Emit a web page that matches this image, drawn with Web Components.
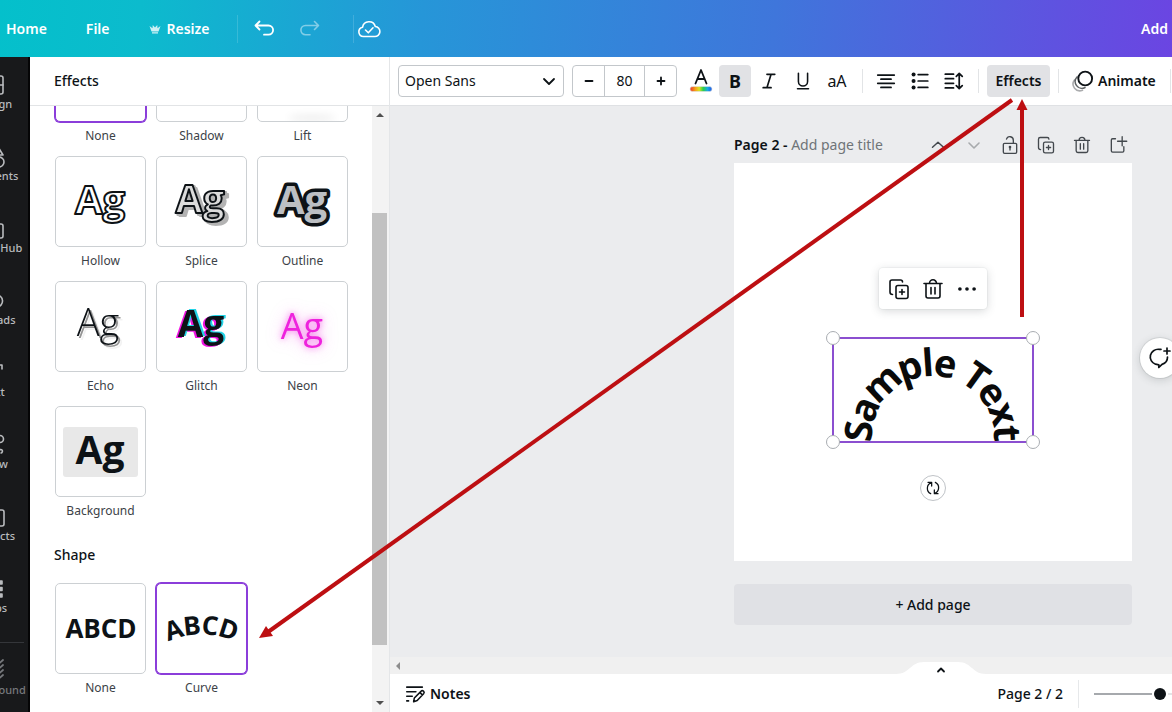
<!DOCTYPE html>
<html lang="en">
<head>
<meta charset="utf-8">
<meta name="viewport" content="width=device-width, initial-scale=1">
<title>Design editor</title>
<style>
  html, body { margin: 0; height: 100%; }
  body { font: 14px/20px "Noto Sans", "Open Sans", sans-serif; color: #0d1216; overflow: hidden; }
</style>
</head>
<body>
<design-app></design-app>

<script>
const RESET = `
  *, *::before, *::after { box-sizing: border-box; }
  :host([hidden]) { display: none; }
  button, select, input { font: inherit; color: inherit; margin: 0; }
  button { border: 0; padding: 0; background: none; cursor: pointer; display: inline-flex; align-items: center; justify-content: center; }
`;

function define(name, css, html, setup) {
  const template = document.createElement('template');
  template.innerHTML = `<style>${RESET}${css}</style>${html}`;
  customElements.define(name, class extends HTMLElement {
    constructor() {
      super();
      this.attachShadow({ mode: 'open' }).append(template.content.cloneNode(true));
    }
    connectedCallback() { if (setup) setup(this, this.shadowRoot); }
  });
}

/* Icons, drawn on a 24 unit grid */
const ICONS = {
  crown: '<path fill="currentColor" stroke="none" d="M1 6 7 10.500 7.500 4l4.500 5 4.500-5 .5 6.500L23 6l-4 11H5zM6 18.500h12V21H6z"/>',
  undo: '<path d="M7.500 4.500 3.500 8.500l4 4M4 8.500h12.500a4.600 4.600 0 0 1 0 9.200H12"/>',
  redo: '<path d="m16.500 4.500 4 4-4 4M20 8.500H7.500a4.600 4.600 0 0 0 0 9.200H12"/>',
  cloud: '<path d="M6.500 19.500a4.700 4.700 0 0 1-.9-9.300 6.500 6.500 0 0 1 12.700-.7 5 5 0 0 1-.8 10zM8.500 13l2.800 2.800 4.700-5"/>',
  chevronDown: '<path d="m7 10 5 5 5-5"/>',
  chevronUp: '<path d="m6 14.500 6-5.500 6 5.500"/>',
  caretUp: '<path d="m9 13.500 3-3 3 3"/>',
  minus: '<path d="M8.500 12h7"/>',
  plus: '<path d="M8.500 12h7M12 8.500v7"/>',
  color: '<path d="M6.500 14.500 12 1l5.500 13.500M8.300 10h7.400" stroke-width="1.800"/><rect x="1" y="17.500" width="22" height="5" rx="2.500" fill="url(#rainbow)" stroke="#dfe1e4" stroke-width=".6"/><defs><linearGradient id="rainbow"><stop offset="0" stop-color="#e8322c"/><stop offset=".25" stop-color="#f6a417"/><stop offset=".42" stop-color="#d8e324"/><stop offset=".6" stop-color="#2ecf4b"/><stop offset=".8" stop-color="#19a9e6"/><stop offset="1" stop-color="#2455e0"/></linearGradient></defs>',
  italic: '<path d="M9.500 4H19M5 20h9.500M14.500 4l-5 16" stroke-width="2"/>',
  underline: '<path d="M7 3.500v9a5 5 0 0 0 10 0v-9M6 20.500h12" stroke-width="1.700"/>',
  align: '<path d="M3 5.500h18M6.500 10h11M3 14.500h18M6.500 19h11" stroke-width="1.900"/>',
  list: '<path d="M10 5h10.500M10 12h10.500M10 19h10.500" stroke-width="1.900"/><circle cx="5" cy="5" r="2.200" fill="currentColor" stroke="none"/><circle cx="5" cy="12" r="2.200" fill="currentColor" stroke="none"/><circle cx="5" cy="19" r="2.200" fill="currentColor" stroke="none"/>',
  spacing: '<path d="M2.500 4.500h9M2.500 9.500h9M2.500 14.500h9M2.500 19.500h9M17.700 4v16M14.500 7l3.200-3.200L21 7M14.500 17l3.200 3.200L21 17" stroke-width="1.900"/>',
  animate: '<circle cx="14.200" cy="9.500" r="6.900" stroke-width="1.900"/><path d="M6 8a6.700 6.700 0 0 0 8 10.500" opacity=".65"/><path d="M3.500 11a6.700 6.700 0 0 0 8 10.200" opacity=".35"/>',
  lock: '<rect x="4" y="10" width="16" height="12" rx="1.500"/><path d="M16 10V6.500a4.200 4.200 0 0 0-8.200-1.500M12 14.500v3.500"/><circle cx="12" cy="14.500" r=".8"/>',
  copy: '<rect x="9" y="8.500" width="12" height="13" rx="2"/><path d="M5.500 17.500A2.500 2.500 0 0 1 3 15V5a2 2 0 0 1 2-2h8.500a2 2 0 0 1 2 2M15 12.500v5M12.500 15h5"/>',
  trash: '<path d="M3 6.500h18M5 6.500V19a2 2 0 0 0 2 2h10a2 2 0 0 0 2-2V6.500M8.500 6.300a3.500 3.500 0 0 1 7 0M10 10.500v6.500M14 10.500v6.500"/>',
  addPage: '<path d="M9 4.500H5.500A1.500 1.500 0 0 0 4 6v13a1.500 1.500 0 0 0 1.500 1.500h12A1.500 1.500 0 0 0 19 19v-5M17 2v11M11.500 7.500h11"/>',
  dots: '<g fill="currentColor" stroke="none"><circle cx="3.500" cy="12" r="2.200"/><circle cx="12" cy="12" r="2.200"/><circle cx="20.500" cy="12" r="2.200"/></g>',
  rotate: '<path d="M4.500 3.500H10v5.500M9.500 4A9 9 0 0 0 8.500 20.500M19.500 20.500H14V15M14.500 20A9 9 0 0 0 15.500 3.500"/>',
  comment: '<path d="M13 3.300h-2a8 7.700 0 0 0-3.500 14.900l3.300.6v2.700l3.200-3.100a8 7.700 0 0 0 5.500-7.400M19 2v6M16 5h6"/>',
  notes: '<path d="M3 4.500h17M3 9.500h10M3 14.500h6M3 19.500h2M10.500 20.500l.8-4.200 7.200-7.200a1.900 1.900 0 0 1 2.900 2.600l-7 7.400zM17.500 10.500l2.500 2.500"/>',
  design: '<rect x="3" y="3" width="18" height="18" rx="2"/><path d="M3 12h18M14 3V21"/>',
  elements: '<path d="m15.500 1 5.500 9H10z"/><circle cx="17" cy="17" r="5"/><path d="M2 13h7v8H2z"/>',
  brand: '<rect x="3" y="7" width="18" height="14" rx="2"/><path d="M11 7V5a2 2 0 0 1 2-2h2a2 2 0 0 1 2 2v2"/>',
  uploads: '<path d="M9 18H7a5 5 0 0 1-1-9.500 6.500 6.500 0 0 1 8-2.500 6 6 0 1 1 1 12M12 21v-9"/>',
  text: '<path d="M4 7V4h16v4M12 4v16"/>',
  draw: '<path d="M4 20 12 9"/><circle cx="18" cy="6" r="3.500"/><path d="M15 17c3 0 4-1 5 0s0 3-1 3"/>',
  projects: '<path d="M3 19V5h6l1 0h10a2 2 0 0 1 2 2v12a2 2 0 0 1-2 2H5a2 2 0 0 1-2-2z"/>',
  apps: '<path fill="currentColor" d="M4 4h3v3H4zM10 4h3v3h-3zM17 4h3v3h-3zM4 10.500h3v3H4zM10 10.500h3v3h-3zM17 10.500h3v3h-3zM4 17h3v3H4zM10 17h3v3h-3zM17 17h3v3h-3z"/>',
  background: '<path d="m14 7 7-6M14 12l7-6M14 17l7-6M14 22l7-6M3 12l7-6M3 18l7-6" stroke-width="1.800"/>'
};

define('ui-icon',
  `:host { display: inline-flex; flex: none; } svg { display: block; fill: none; stroke: currentColor; stroke-linecap: round; stroke-linejoin: round; }`,
  `<svg viewBox="0 0 24 24" aria-hidden="true"></svg>`,
  (host, root) => {
    const svg = root.querySelector('svg');
    const size = host.getAttribute('size') || '24';
    svg.setAttribute('width', size);
    svg.setAttribute('height', size);
    svg.setAttribute('stroke-width', host.getAttribute('weight') || '1.600');
    svg.innerHTML = ICONS[host.getAttribute('name')];
  });

define('top-bar', `
  :host { display: flex; align-items: center; height: 57px; padding: 0 4px 0 6px; color: #fff; font-weight: 600; overflow: hidden; white-space: nowrap;
    background: linear-gradient(95deg, #04c0cb 0%, #0cbbcd 12%, #2696d8 36%, #3f76db 66%, #5f52e0 90%, #6b45e2 100%); }
  nav { display: flex; align-items: center; gap: 39px; flex: 1; }
  a { color: inherit; text-decoration: none; display: flex; align-items: center; gap: 6px; }
  .tools { display: flex; align-items: center; height: 32px; margin-left: -12px; }
  .tools button { width: 46px; height: 32px; }
  i { width: 1px; height: 28px; background: #ffffff26; }
  .tools .undo { margin-left: 3px; }
  .dim { opacity: .45; margin-right: 20px; }
  .tools .save { width: 30px; }
  .crown { opacity: .8; }
`, `
  <nav aria-label="Main">
    <a href="#home">Home</a><a href="#file">File</a>
    <a href="#resize"><ui-icon class="crown" name="crown" size="12"></ui-icon>Resize</a>
    <div class="tools"><i></i>
      <button class="undo" aria-label="Undo"><ui-icon name="undo" weight="1.800"></ui-icon></button>
      <button class="dim" aria-label="Redo"><ui-icon name="redo"></ui-icon></button><i></i>
      <button class="save" aria-label="Saved"><ui-icon name="cloud"></ui-icon></button>
    </div>
  </nav>
  <a href="#add">Add</a>
`);

define('rail-item', `
  :host { display: block; height: 72px; }
  a { display: flex; flex-direction: column; align-items: center; width: 72px; padding-top: 16px; color: #b9bbbe; text-decoration: none; font-size: 11px; line-height: 14px; font-weight: 500; white-space: nowrap; }
  :host([faded]) a { color: #76787c; }
`, `<a href="#panel"><ui-icon></ui-icon><slot></slot></a>`,
(host, root) => {
  const icon = document.createElement('ui-icon');
  icon.setAttribute('name', host.getAttribute('icon'));
  root.querySelector('ui-icon').replaceWith(icon);
});

define('side-rail', `
  :host { display: flex; justify-content: flex-end; overflow: hidden; background: #18191b; border-right: 2px solid #050506; }
  nav { flex: none; width: 70px; }
  hr { margin: 9px 4px 0 0; border: 0; border-top: 1px solid #34363a; }
`, `
  <nav aria-label="Tools">
    <rail-item icon="design">Design</rail-item>
    <rail-item icon="elements">Elements</rail-item>
    <rail-item icon="brand">Brand Hub</rail-item>
    <rail-item icon="uploads">Uploads</rail-item>
    <rail-item icon="text">Text</rail-item>
    <rail-item icon="draw">Draw</rail-item>
    <rail-item icon="projects">Projects</rail-item>
    <rail-item icon="apps">Apps</rail-item>
    <hr>
    <rail-item icon="background" faded>Background</rail-item>
  </nav>
`);

define('effect-tile', `
  :host { display: flex; flex-direction: column; gap: 5px; align-items: center; }
  button { width: 91px; height: 91px; border: 1px solid #ccd0d3; border-radius: 5px; background: #fff; overflow: hidden; }
  :host([selected]) button { border-color: #8b3dda; box-shadow: 0 0 0 1px #8b3dda; }
  label { font-size: 12px; line-height: 18px; color: #3c4247; }
`, `<button id="tile"><slot></slot></button><label for="tile"></label>`,
(host, root) => {
  root.querySelector('label').textContent = host.getAttribute('label');
  root.querySelector('button').setAttribute('aria-pressed', host.hasAttribute('selected'));
});

/* Sample lettering inside the tiles */
const T = (attrs, x = 45, y = 57, word = 'Ag') => `<text x="${x}" y="${y}" text-anchor="middle" ${attrs}>${word}</text>`;
const ART = {
  lift: '<ellipse cx="54" cy="86" rx="24" ry="2" fill="#000" opacity=".12" style="filter:blur(4px)"/>',
  hollow: T('font-weight="700" font-size="40" fill="#fff" stroke="#0d1216" stroke-width="2"', 44, 57),
  splice: T('font-weight="700" font-size="39" fill="#dcdcdc" stroke="#0d1216" stroke-width="2" style="filter:drop-shadow(2px 1px 0 #b3b3b3) drop-shadow(2px 2px 0 #b3b3b3)"', 43, 56),
  outline: T('font-weight="700" font-size="40" fill="#bcbfc3" stroke="#0d1216" stroke-width="7" paint-order="stroke"', 44, 57),
  echo: T('font-weight="300" font-size="38" fill="#0d1216" style="filter:drop-shadow(2px 2px 0 #00000050) drop-shadow(2px 2px 0 #00000028)"', 42, 54),
  glitch: T('font-weight="700" font-size="37" fill="#0d1216" style="filter:drop-shadow(2px -1px 0 #22d3e6) drop-shadow(-2px 1px 0 #f013e2)"', 44, 55),
  neon: T('font-weight="500" font-size="36" fill="#ee22dd" style="filter:drop-shadow(0 0 3px #ee22dd99) drop-shadow(0 0 8px #ee22dd44)"', 44, 57),
  background: '<rect x="7" y="20" width="75" height="50" rx="3" fill="#e8e8e8"/>' + T('font-weight="700" font-size="39" fill="#0d1216"', 44, 57),
  straight: T('font-weight="700" font-size="26" fill="#0d1216"', 45, 54, 'ABCD'),
  curved: '<path id="arc" d="M-.5 59.500A84 84 0 0 1 89.500 59.500" fill="none"/><text font-weight="700" font-size="26" fill="#0d1216" text-anchor="middle"><textPath href="#arc" startOffset="50%"><tspan dy="4">ABCD</tspan></textPath></text>'
};
define('effect-art',
  `:host { display: block; } svg { display: block; font-family: "Open Sans", "Noto Sans", sans-serif; stroke-linejoin: round; }`,
  `<svg width="89" height="89" viewBox="0 0 89 89" aria-hidden="true"></svg>`,
  (host, root) => { root.querySelector('svg').innerHTML = ART[host.getAttribute('kind')]; });

define('effects-panel', `
  :host { display: flex; flex-direction: column; min-width: 0; min-height: 0; background: #fff; border-right: 1px solid #e4e6e8; }
  header { flex: none; height: 49px; display: flex; align-items: center; padding-left: 24px; border-bottom: 1px solid #e2e4e6; }
  h2, h3 { margin: 0; font-size: 14px; line-height: 20px; font-weight: 500; }
  .body { flex: 1; min-height: 0; display: flex; overflow: hidden; }
  .list { flex: 1; margin-top: -75px; padding-left: 25px; }
  .grid { display: grid; grid-template-columns: repeat(3, 91px); gap: 11px 10px; }
  h3 { margin: 25px 0 18px -1px; }
  .bar { flex: none; width: 17px; padding-right: 2px; background: #f3f3f3; display: flex; flex-direction: column; align-items: stretch; }
  .arrow { flex: none; height: 18px; display: flex; align-items: center; justify-content: center; }
  .arrow::before { content: ""; border: 4px solid transparent; border-top: 0; border-bottom: 4px solid #505050; }
  .arrow.down::before { transform: rotate(180deg); }
  .track { flex: 1; display: flex; flex-direction: column; }
  .track::before { content: ""; flex: 89; }
  .thumb { flex: 432; background: #c1c1c1; }
  .track::after { content: ""; flex: 49; }
`, `
  <header><h2>Effects</h2></header>
  <div class="body">
    <div class="list">
      <div class="grid">
        <effect-tile label="None" selected></effect-tile>
        <effect-tile label="Shadow"></effect-tile>
        <effect-tile label="Lift"><effect-art kind="lift"></effect-art></effect-tile>
        <effect-tile label="Hollow"><effect-art kind="hollow"></effect-art></effect-tile>
        <effect-tile label="Splice"><effect-art kind="splice"></effect-art></effect-tile>
        <effect-tile label="Outline"><effect-art kind="outline"></effect-art></effect-tile>
        <effect-tile label="Echo"><effect-art kind="echo"></effect-art></effect-tile>
        <effect-tile label="Glitch"><effect-art kind="glitch"></effect-art></effect-tile>
        <effect-tile label="Neon"><effect-art kind="neon"></effect-art></effect-tile>
        <effect-tile label="Background"><effect-art kind="background"></effect-art></effect-tile>
      </div>
      <h3>Shape</h3>
      <div class="grid">
        <effect-tile label="None"><effect-art kind="straight"></effect-art></effect-tile>
        <effect-tile label="Curve" selected><effect-art kind="curved"></effect-art></effect-tile>
      </div>
    </div>
    <div class="bar"><span class="arrow"></span><div class="track"><div class="thumb"></div></div><span class="arrow down"></span></div>
  </div>
`);

define('text-toolbar', `
  :host { display: flex; align-items: center; height: 49px; padding-left: 8px; background: #fff; border-bottom: 1px solid #dfe1e4; overflow: hidden; white-space: nowrap; }
  .font { flex: none; position: relative; display: flex; align-items: center; width: 166px; height: 32px; border: 1px solid #c3c7cb; border-radius: 4px; }
  select { appearance: none; border: 0; outline: 0; background: none; width: 100%; height: 100%; padding: 0 6px; }
  .font ui-icon { position: absolute; right: 2px; pointer-events: none; }
  .size { flex: none; display: flex; margin-left: 8px; width: 105px; height: 32px; border: 1px solid #c3c7cb; border-radius: 4px; }
  .size button { flex: 1; }
  .size input { width: 41px; text-align: center; border: solid #c3c7cb; border-width: 0 1px; outline: 0; padding: 0; }
  .set { display: flex; margin-left: 8px; gap: 2px; }
  .set button, .para button { width: 32px; height: 32px; border-radius: 4px; }
  .on { background: #e1e2e5; }
  .set .bold { font-size: 18px; font-weight: 700; }
  .set .case { font-size: 16px; }
  i { flex: none; width: 1px; height: 24px; background: #e2e4e6; }
  .set + i { margin-left: 9px; }
  .para { display: flex; gap: 2px; margin: 0 8px 0 7px; }
  .effects { height: 32px; border-radius: 4px; width: 63px; margin: 0 8px; font-weight: 600; flex: none; }
  .animate { gap: 3px; margin: 0 14px 0 12px; font-weight: 600; }
`, `
  <div class="font"><select aria-label="Font"><option>Open Sans</option></select><ui-icon name="chevronDown" size="24" weight="1.800"></ui-icon></div>
  <div class="size"><button aria-label="Decrease size"><ui-icon name="minus" size="24" weight="1.800"></ui-icon></button><input aria-label="Font size" value="80"><button aria-label="Increase size"><ui-icon name="plus" size="24" weight="1.800"></ui-icon></button></div>
  <div class="set">
    <button aria-label="Text color"><ui-icon name="color" size="24"></ui-icon></button>
    <button class="on bold" aria-label="Bold">B</button>
    <button aria-label="Italic"><ui-icon name="italic" size="20"></ui-icon></button>
    <button aria-label="Underline"><ui-icon name="underline" size="22"></ui-icon></button>
    <button class="case" aria-label="Uppercase">aA</button>
  </div><i></i>
  <div class="para">
    <button aria-label="Alignment"><ui-icon name="align" size="22"></ui-icon></button>
    <button aria-label="List"><ui-icon name="list" size="22"></ui-icon></button>
    <button aria-label="Spacing"><ui-icon name="spacing" size="22"></ui-icon></button>
  </div><i></i>
  <button class="on effects">Effects</button><i></i>
  <button class="animate"><ui-icon name="animate" size="24"></ui-icon>Animate</button><i></i>
`);

define('page-header', `
  :host { display: flex; align-items: center; height: 36px; white-space: nowrap; }
  p { margin: 0; flex: 1; font-weight: 600; }
  span { color: #6f7478; font-weight: 400; }
  .tools { display: flex; gap: 12px; margin-right: 2px; color: #43484d; }
  button { width: 24px; height: 24px; }
  .off { opacity: .4; }
`, `
  <p>Page 2 - <span>Add page title</span></p>
  <div class="tools">
    <button aria-label="Move up"><ui-icon name="chevronUp" size="22"></ui-icon></button>
    <button class="off" aria-label="Move down"><ui-icon name="chevronDown" size="24"></ui-icon></button>
    <button aria-label="Lock"><ui-icon name="lock" size="20"></ui-icon></button>
    <button aria-label="Duplicate"><ui-icon name="copy" size="20"></ui-icon></button>
    <button aria-label="Delete"><ui-icon name="trash" size="20"></ui-icon></button>
    <button aria-label="Add page"><ui-icon name="addPage" size="20"></ui-icon></button>
  </div>
`);

define('design-page', `
  :host { display: block; position: relative; aspect-ratio: 1; background: #fff; }
  .menu { position: absolute; left: 50%; top: 105px; transform: translateX(-50%); display: flex; align-items: center; gap: 10px; height: 41px; padding: 0 8px; background: #fff; border-radius: 4px; box-shadow: 0 0 0 1px #3940460a, 0 2px 10px #39404633; }
  .menu button { width: 24px; height: 32px; }
  .selection { position: absolute; left: 50%; top: 174px; width: 202px; height: 106px; transform: translateX(-50%); border: 2px solid #8b4fd0; }
  .selection svg { display: block; overflow: visible; font-family: "Open Sans", "Noto Sans", sans-serif; }
  .handle { position: absolute; width: 14px; height: 14px; border-radius: 50%; border: 1px solid #a9adb2; background: #fff; }
  .tl { left: -8px; top: -8px; } .tr { right: -8px; top: -8px; } .bl { left: -8px; bottom: -8px; } .br { right: -8px; bottom: -8px; }
  .rotate { position: absolute; left: 50%; top: 312px; transform: translateX(-50%); width: 26px; height: 26px; border-radius: 50%; border: 1px solid #bfc3c7; background: #fff; }
`, `
  <div class="menu">
    <button aria-label="Duplicate"><ui-icon name="copy" size="24"></ui-icon></button>
    <button aria-label="Delete"><ui-icon name="trash" size="24"></ui-icon></button>
    <button aria-label="More"><ui-icon name="dots" size="20"></ui-icon></button>
  </div>
  <div class="selection">
    <svg width="198" height="102" viewBox="0 0 198 102">
      <path id="curve" d="M28 128V98A71 71 0 0 1 170 98V128" fill="none"/>
      <text font-size="38" font-weight="700" text-anchor="middle" fill="#0a0a0a"><textPath href="#curve" startOffset="50%"><tspan dy="10">Sample Text</tspan></textPath></text>
    </svg>
    <span class="handle tl"></span><span class="handle tr"></span><span class="handle bl"></span><span class="handle br"></span>
  </div>
  <button class="rotate" aria-label="Rotate"><ui-icon name="rotate" size="16" weight="1.900"></ui-icon></button>
`);

define('canvas-area', `
  :host { position: relative; display: flex; flex-direction: column; min-height: 0; background: #ebecee; overflow: hidden; }
  .stage { flex: 1; min-height: 0; padding: 21px 40px 0 0; }
  .column { max-width: 398px; margin-left: auto; }
  .add { width: 100%; height: 41px; margin-top: 23px; border-radius: 4px; background: #e0e1e5; font-weight: 500; }
  .hbar { flex: none; height: 17px; background: #f0f0f0; display: flex; align-items: center; padding-left: 6px; }
  .hbar::before { content: ""; border: 4px solid transparent; border-left: 0; border-right-color: #8d8d8d; }
  .comment { position: absolute; right: -8px; top: 232px; width: 40px; height: 40px; border-radius: 50%; background: #fff; box-shadow: 0 0 0 1px #3940461a, 0 2px 8px #39404633; }
`, `
  <div class="stage"><div class="column">
    <page-header></page-header>
    <design-page></design-page>
    <button class="add">+ Add page</button>
  </div></div>
  <div class="hbar"></div>
  <button class="comment" aria-label="Add comment"><ui-icon name="comment" size="24" weight="1.700"></ui-icon></button>
`);

define('status-bar', `
  :host { position: relative; display: flex; align-items: center; height: 38px; padding: 2px 0 0 14px; background: #fff; font-weight: 500; white-space: nowrap; }
  .notes { gap: 4px; font-weight: 600; }
  .pages { margin-left: auto; }
  i { width: 1px; height: 28px; margin: 0 15px; background: #e6e8ea; }
  .zoom { width: 78px; overflow: hidden; display: flex; }
  input { appearance: none; flex: none; width: 132px; height: 16px; background: linear-gradient(#a6a9ad, #a6a9ad) left / 58px 2px no-repeat, linear-gradient(#e3e4e6, #e3e4e6) right / 58px 2px no-repeat; outline: 0; }
  input::-webkit-slider-thumb { appearance: none; width: 12px; height: 12px; border-radius: 50%; background: #0d1216; }
  .tab { position: absolute; right: 186px; top: -12px; width: 90px; height: 20px; padding-bottom: 4px; }
  .tab svg { position: absolute; inset: 0; fill: #fff; }
  .tab ui-icon { position: relative; }
`, `
  <button class="tab" aria-label="Show pages"><svg width="90" height="20" viewBox="0 0 90 20"><path d="M0 12c14 0 14-12 28-12h34c14 0 14 12 28 12v8H0z"/></svg><ui-icon name="caretUp" size="24" weight="1.800"></ui-icon></button>
  <button class="notes"><ui-icon name="notes" size="22" weight="1.700"></ui-icon>Notes</button>
  <span class="pages">Page 2 / 2</span><i></i>
  <div class="zoom"><input type="range" aria-label="Zoom" min="0" max="100" value="50"></div>
`);

/* Tutorial arrows lying over the editor */
define('callout-arrows', `
  :host { position: absolute; inset: 0; pointer-events: none; overflow: hidden; }
  svg { display: block; } line { stroke: #bd0f12; stroke-width: 4; } path { fill: #bd0f12; }
`, `
  <svg width="1172" height="712" viewBox="0 0 1172 712" aria-hidden="true">
    <line x1="1012" y1="100" x2="268" y2="632"/><path d="M259 638 266 626 273 636z"/>
    <line x1="1022" y1="317" x2="1022" y2="106"/><path d="M1022 99 1027.500 110h-11z"/>
  </svg>
`);

define('design-app', `
  :host { position: relative; display: grid; grid-template: "top top top" auto "rail panel editor" minmax(0, 1fr) / 30px 360px minmax(0, 1fr); height: 100vh; overflow: hidden; }
  top-bar { grid-area: top; } side-rail { grid-area: rail; } effects-panel { grid-area: panel; }
  main { grid-area: editor; display: flex; flex-direction: column; min-height: 0; min-width: 0; }
  text-toolbar, status-bar { flex: none; }
  canvas-area { flex: 1; }
`, `
  <top-bar></top-bar>
  <side-rail></side-rail>
  <effects-panel></effects-panel>
  <main><text-toolbar></text-toolbar><canvas-area></canvas-area><status-bar></status-bar></main>
  <callout-arrows></callout-arrows>
`);
</script>
</body>
</html>
